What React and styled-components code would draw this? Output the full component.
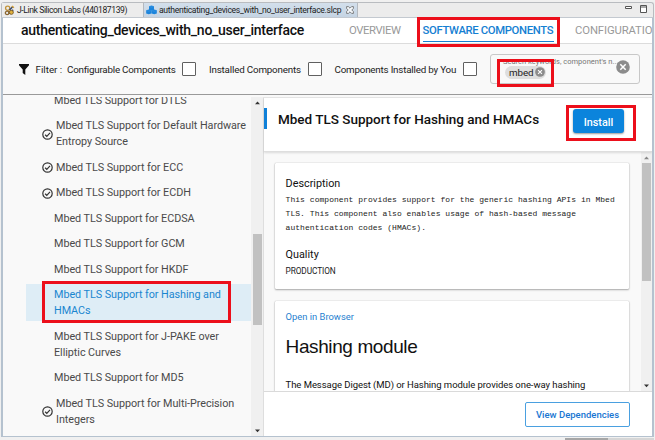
import React from 'react';
import styled, { createGlobalStyle } from 'styled-components';

const Global = createGlobalStyle`
  * { box-sizing: border-box; }
  body { margin: 0; background: #f0f0f0; font-family: Roboto, sans-serif; color: #111; overflow: hidden; }
  h1, h2, h3, p { margin: 0; }
`;

const Window = styled.div`
  position: relative;
  width: 655px;
  height: 440px;
  padding: 2px 1px 0 1px;
  display: flex;
  flex-direction: column;
  overflow: hidden;
  background: #f0f0f0;
`;

const TabBar = styled.div`
  height: 16px;
  display: flex;
  flex: none;
  border: 1px solid #b9bcc0;
  border-bottom-color: #c3c9d0;
  border-radius: 3px 3px 0 0;
  background: #ececec;
  font: 8.6px/15px Roboto, sans-serif;
  color: #1c1c1c;
`;

const Tab = styled.div`
  width: ${p => p.$w}px;
  flex: none;
  display: flex;
  align-items: center;
  gap: 2px;
  padding-left: 2px;
  white-space: nowrap;
  letter-spacing: ${p => p.$ls}px;
  background: ${p => (p.$active ? 'linear-gradient(#d3dfeb, #c5d4e3)' : '#ececec')};
  border-right: 1px solid #b4b9bf;
  svg { flex: none; }
  svg:last-child { margin-left: ${p => (p.$active ? 3 : 0)}px; }
`;

const WindowButtons = styled.div`
  margin-left: auto;
  display: flex;
  padding: 1px 6px 0 0;
  gap: 8px;
`;

const Frame = styled.div`
  height: 419px;
  flex: none;
  display: flex;
  flex-direction: column;
  border: solid #b5c2cf;
  border-width: 0 2px 1.5px 2px;
  background: #f9f9f9;
  overflow: hidden;
`;

const Header = styled.header`
  height: 26px;
  flex: none;
  display: flex;
  align-items: center;
  background: #fff;
  border-bottom: 1px solid #dcdcdc;
  padding-left: 18px;
  white-space: nowrap;
  overflow: hidden;
`;

const Title = styled.h1`
  width: 328px;
  flex: none;
  font-size: 14px;
  line-height: 25px;
  font-weight: 500;
  letter-spacing: -0.26px;
`;

const NavItem = styled.div`
  width: ${p => p.$w}px;
  flex: none;
  height: 25px;
  margin-right: 21.5px;
  font-size: 11.3px;
  line-height: 26px;
  font-weight: ${p => (p.$active ? 500 : 400)};
  letter-spacing: ${p => p.$ls}px;
  color: ${p => (p.$active ? '#1580d2' : '#999')};
  box-shadow: ${p => (p.$active ? 'inset 0 -1px #fff, inset 0 -2px #1580d2' : 'none')};
`;

const FilterBar = styled.div`
  height: 51px;
  flex: none;
  display: flex;
  align-items: center;
  padding-left: 16px;
  border-bottom: 1px solid #9a9a9a;
  font-size: 9.8px;
  color: #222;
  white-space: nowrap;
`;

const FilterLabel = styled.span`
  width: ${p => p.$w}px;
  flex: none;
  letter-spacing: ${p => p.$ls}px;
  svg { display: block; }
`;

const Checkbox = styled.span`
  width: 14px;
  height: 14px;
  flex: none;
  margin-right: ${p => p.$gap}px;
  border: 1.5px solid #606060;
  border-radius: 1px;
  background: #fff;
`;

const Search = styled.div`
  position: relative;
  width: 150px;
  height: 30px;
  flex: none;
  display: flex;
  align-items: center;
  justify-content: space-between;
  padding: 7px 9px 0 14px;
  margin-top: -1px;
  border: 1px solid #c8c8c8;
  border-radius: 3px;
`;

const SearchHint = styled.span`
  position: absolute;
  left: 12px;
  top: 2px;
  font-size: 7.5px;
  line-height: 10px;
  letter-spacing: 0.02px;
  color: #777;
`;

const Chip = styled.span`
  position: relative;
  height: 13px;
  display: flex;
  align-items: center;
  gap: 2px;
  padding: 0 1px 0 4px;
  border-radius: 7px;
  background: #dedede;
  font-size: 9.8px;
  letter-spacing: -0.1px;
  color: #222;
`;

const ClearWrap = styled.span`
  display: flex;
  margin-bottom: 10px;
`;

const Body = styled.div`
  flex: 1;
  min-height: 0;
  display: flex;
  padding-top: 2px;
`;

const Tree = styled.div`
  width: 248px;
  padding-left: 23px;
  overflow: hidden;
`;

const TreeList = styled.div`
  margin-top: -7.4px;
`;

const TreeRow = styled.div`
  display: flex;
  align-items: center;
  margin-bottom: 4px;
  padding: 3.1px 0 2.4px ${p => (p.$installed ? 16 : 28)}px;
  font-size: 10.8px;
  line-height: 16px;
  letter-spacing: -0.05px;
  white-space: pre;
  color: ${p => (p.$selected ? '#1a86d0' : '#4a4a4a')};
  background: ${p => (p.$selected ? '#deedf6' : 'transparent')};
  svg { flex: none; margin-right: 3px; }
`;

const ScrollTrack = styled.div`
  width: ${p => p.$w}px;
  flex: none;
  display: flex;
  flex-direction: column;
  align-items: center;
  background: #f0f0f0;
`;

const ScrollThumb = styled.div`
  width: 9px;
  height: ${p => p.$h}px;
  margin-top: ${p => p.$top}px;
  margin-bottom: auto;
  background: #c1c1c1;
`;

const ArrowBox = styled.div`
  height: 11px;
  display: flex;
  align-items: center;
`;

const Detail = styled.section`
  flex: 1;
  min-width: 0;
  display: flex;
  flex-direction: column;
  border-left: 1px solid #dedede;
  border-top: 1px solid #e6e6e6;
`;

const DetailHeader = styled.div`
  position: relative;
  height: 54px;
  flex: none;
  display: flex;
  align-items: flex-start;
  padding-top: 10px;
  background: #fff;
  border-bottom: 1px solid #dedede;
  box-shadow: 0 1px 2px rgba(0, 0, 0, 0.12);
`;

const Accent = styled.span`
  width: 3px;
  height: 21px;
  background: #0f80d8;
`;

const DetailTitle = styled.h2`
  width: 306px;
  padding-left: 11px;
  font-size: 13.5px;
  line-height: 22px;
  font-weight: 500;
  letter-spacing: -0.01px;
  white-space: nowrap;
`;

const InstallButton = styled.button`
  width: 51px;
  height: 24px;
  margin-top: 1px;
  padding: 2px 0 0;
  border: 0;
  border-radius: 3px;
  background: #0b84dc;
  color: #fff;
  font: 500 10.8px Roboto, sans-serif;
  box-shadow: 0 1px 2px rgba(0, 0, 0, 0.4);
`;

const DetailBody = styled.div`
  height: 239px;
  flex: none;
  display: flex;
  overflow: hidden;
`;

const Cards = styled.div`
  flex: 1;
  display: flex;
  flex-direction: column;
  gap: 12px;
  padding: 11px 12px 0 11px;
`;

const Card = styled.div`
  height: ${p => p.$h}px;
  flex: none;
  padding: ${p => p.$top}px 0 0 10.6px;
  background: #fff;
  border-radius: 1px;
  box-shadow: 0 0 1px rgba(0, 0, 0, 0.4), 0 1px 2px rgba(0, 0, 0, 0.3);
`;

const Label = styled.h3`
  font-size: 10.8px;
  line-height: 14px;
  font-weight: 400;
`;

const Mono = styled.p`
  margin: 2px 0 13px;
  font: 8px/14px 'Liberation Mono', monospace;
  letter-spacing: 0.04px;
  color: #222;
  white-space: pre;
`;

const Small = styled.p`
  margin-top: 2px;
  font-size: 8.3px;
  line-height: 14px;
  letter-spacing: -0.1px;
  color: #222;
`;

const Link = styled.p`
  font-size: 9.4px;
  line-height: 12px;
  color: #1f7fd0;
`;

const ModuleTitle = styled.h2`
  margin-top: 11px;
  font: 400 19px/26px 'Liberation Sans', Arial, sans-serif;
  letter-spacing: -0.4px;
`;

const Text = styled.p`
  margin-top: 18px;
  font-size: 9.5px;
  line-height: 14px;
  letter-spacing: -0.06px;
  color: #111;
  white-space: nowrap;
`;

const Footer = styled.footer`
  position: relative;
  flex: 1;
  padding: 10px 22px 0 0;
  display: flex;
  justify-content: flex-end;
  background: #fff;
  border-top: 1px solid #dadada;
`;

const OutlineButton = styled.button`
  width: 105px;
  height: 25px;
  padding: 0;
  border: 1px solid #4aa0e0;
  border-radius: 2px;
  background: #fff;
  color: #1976d2;
  font: 500 9.5px Roboto, sans-serif;
`;

const BottomBar = styled.div`
  display: flex;
  height: 2px;
  margin: 1px 0 0 564px;
  background: #d6d6d6;
`;

const BottomThumb = styled.span`
  width: 43px;
  background: #a6a6a6;
`;

const Highlight = styled.div`
  position: absolute;
  left: ${p => p.$x}px;
  top: ${p => p.$y}px;
  width: ${p => p.$w}px;
  height: ${p => p.$h}px;
  border: 3px solid #ec0f1b;
`;

const Check = () => (
  <svg width="11" height="11" viewBox="0 0 11 11" fill="none" stroke="#333" strokeWidth="1.2">
    <circle cx="5.5" cy="5.5" r="4.7" />
    <path d="M3.1 5.7 4.8 7.3 8 3.9" />
  </svg>
);

const Arrow = ({ down, light }) => (
  <svg width="5" height="4" viewBox="0 0 5 4">
    <path d={down ? 'M0 .5H5L2.5 3.2Z' : 'M0 3.2H5L2.5 .5Z'} fill={light ? '#888' : '#333'} />
  </svg>
);

const Clear = ({ size }) => (
  <svg width={size} height={size} viewBox="0 0 14 14">
    <circle cx="7" cy="7" r="6.8" fill="#8c8c8c" />
    <path d="m4.3 4.3 5.4 5.4m0-5.4-5.4 5.4" stroke="#fff" strokeWidth="1.5" />
  </svg>
);

const Jlink = () => (
  <svg width="11" height="11" viewBox="0 0 12 12" fill="none">
    <circle cx="4" cy="3.5" r="2.3" stroke="#c2933a" strokeWidth="1.5" />
    <circle cx="3.4" cy="8.6" r="1.9" stroke="#8b662f" strokeWidth="1.4" />
    <path d="M6 5.5 9.8 1.6M6 9.5 10 5.2" stroke="#34486f" strokeWidth="1.6" />
    <circle cx="8" cy="8" r="2.2" fill="#e2b33e" stroke="#765520" />
    <path d="m8.5 1 2.3 2" stroke="#d29d35" strokeWidth="1.5" />
  </svg>
);

const Cubes = () => (
  <svg width="11" height="10" viewBox="0 0 12 10">
    <path d="M3.3 1 6 .2 8.7 1v3.6L6 5.2 3.3 4.6ZM.2 5.2 3 4.5l2.9.7v3.5L3 9.6l-2.8-.9ZM6.1 5.2 9 4.5l2.8.7v3.5L9 9.6l-2.9-.9Z" fill="#1b84dc" />
    <path d="m3.8 1.2 2.2.6 2.2-.6M.7 5.7l2.3.6 2.3-.6m1.3 0 2.4.6 2.3-.6" stroke="#55a8ea" strokeWidth=".4" fill="none" />
  </svg>
);

const CloseTab = () => (
  <svg width="8" height="8" viewBox="0 0 8 8" fill="#f4f7fa" stroke="#666" strokeWidth=".8">
    <path d="M.6.6h1.8L4 2.2 5.6.6h1.8v1.8L5.8 4l1.6 1.6v1.8H5.6L4 5.8 2.4 7.4H.6V5.6L2.2 4 .6 2.4Z" />
  </svg>
);

const Funnel = () => (
  <svg width="10" height="11" viewBox="0 0 10 11">
    <path d="M0 0h10v1.3L6.3 5.6V11L3.7 9V5.6L0 1.3Z" fill="#111" />
  </svg>
);

const rows = [
  { text: 'Mbed TLS Support for DTLS' },
  { text: 'Mbed TLS Support for Default Hardware\nEntropy Source', installed: true },
  { text: 'Mbed TLS Support for ECC', installed: true },
  { text: 'Mbed TLS Support for ECDH', installed: true },
  { text: 'Mbed TLS Support for ECDSA' },
  { text: 'Mbed TLS Support for GCM' },
  { text: 'Mbed TLS Support for HKDF' },
  { text: 'Mbed TLS Support for Hashing and\nHMACs', selected: true },
  { text: 'Mbed TLS Support for J-PAKE over\nElliptic Curves' },
  { text: 'Mbed TLS Support for MD5' },
  { text: 'Mbed TLS Support for Multi-Precision\nIntegers', installed: true },
];

const description =
  'This component provides support for the generic hashing APIs in Mbed\nTLS. This component also enables usage of hash-based message\nauthentication codes (HMACs).';

export default function App() {
  return (
    <Window>
      <Global />
      <TabBar>
        <Tab $w={142} $ls={-0.41}><Jlink />J-Link Silicon Labs (440187139)</Tab>
        <Tab $w={214} $ls={-0.31} $active><Cubes />authenticating_devices_with_no_user_interface.slcp<CloseTab /></Tab>
        <WindowButtons>
          <svg width="22" height="10" viewBox="0 0 22 10" fill="#fff" stroke="#555">
            <path d="M.5 2.5h6v2h-6ZM15.5 1.5h6v7h-6ZM15.5 3h6" />
          </svg>
        </WindowButtons>
      </TabBar>
      <Frame>
        <Header>
          <Title>authenticating_devices_with_no_user_interface</Title>
          <NavItem $w={52} $ls={-0.4}>OVERVIEW</NavItem>
          <NavItem $w={131} $ls={-0.35} $active>SOFTWARE COMPONENTS</NavItem>
          <NavItem $w={82} $ls={-0.12}>CONFIGURATION</NavItem>
        </Header>
        <FilterBar>
          <FilterLabel $w={16.5}><Funnel /></FilterLabel>
          <FilterLabel $w={31.5} $ls={0}>Filter :</FilterLabel>
          <FilterLabel $w={115} $ls={-0.23}>Configurable Components</FilterLabel>
          <Checkbox $gap={13} />
          <FilterLabel $w={98.5} $ls={-0.18}>Installed Components</FilterLabel>
          <Checkbox $gap={13} />
          <FilterLabel $w={128.5} $ls={-0.2}>Components Installed by You</FilterLabel>
          <Checkbox $gap={13} />
          <Search>
            <SearchHint>Search keywords, component's n...</SearchHint>
            <Chip>mbed<Clear size={10} /></Chip>
            <ClearWrap><Clear size={14} /></ClearWrap>
          </Search>
        </FilterBar>
        <Body>
          <Tree>
            <TreeList>
              {rows.map(r => (
                <TreeRow key={r.text} $installed={r.installed} $selected={r.selected}>
                  {r.installed && <Check />}
                  <span>{r.text}</span>
                </TreeRow>
              ))}
            </TreeList>
          </Tree>
          <ScrollTrack $w={12}>
            <ArrowBox><Arrow /></ArrowBox>
            <ScrollThumb $top={126} $h={91} />
            <ArrowBox><Arrow down /></ArrowBox>
          </ScrollTrack>
          <Detail>
            <DetailHeader>
              <Accent />
              <DetailTitle>Mbed TLS Support for Hashing and HMACs</DetailTitle>
              <InstallButton>Install</InstallButton>
            </DetailHeader>
            <DetailBody>
              <Cards>
                <Card $h={126} $top={14}>
                  <Label>Description</Label>
                  <Mono>{description}</Mono>
                  <Label>Quality</Label>
                  <Small>PRODUCTION</Small>
                </Card>
                <Card $h={150} $top={10}>
                  <Link>Open in Browser</Link>
                  <ModuleTitle>Hashing module</ModuleTitle>
                  <Text>The Message Digest (MD) or Hashing module provides one-way hashing</Text>
                </Card>
              </Cards>
              <ScrollTrack $w={11}>
                <ArrowBox><Arrow light /></ArrowBox>
                <ScrollThumb $top={0} $h={118} />
                <ArrowBox><Arrow down /></ArrowBox>
              </ScrollTrack>
            </DetailBody>
            <Footer><OutlineButton>View Dependencies</OutlineButton></Footer>
          </Detail>
        </Body>
      </Frame>
      <BottomBar><BottomThumb /></BottomBar>
      <Highlight $x={417} $y={17} $w={143} $h={30} />
      <Highlight $x={497} $y={59} $w={57} $h={28} />
      <Highlight $x={42} $y={281} $w={189} $h={42} />
      <Highlight $x={566} $y={105} $w={70} $h={36} />
    </Window>
  );
}
